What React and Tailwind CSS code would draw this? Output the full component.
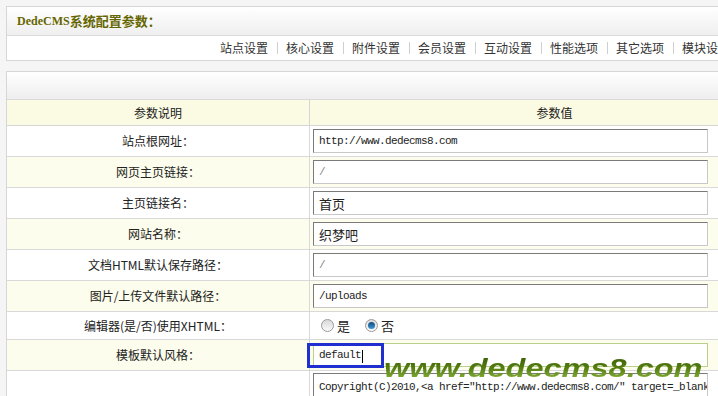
import React from "react";

const rows = [
  { label: "站点根网址：", value: "http://www.dedecms8.com", mono: true },
  { label: "网页主页链接：", value: "/", mono: true, dim: true },
  { label: "主页链接名：", value: "首页" },
  { label: "网站名称：", value: "织梦吧" },
  { label: "文档HTML默认保存路径：", value: "/", mono: true, dim: true },
  { label: "图片/上传文件默认路径：", value: "/uploads", mono: true },
  { label: "编辑器(是/否)使用XHTML：", radio: true },
  { label: "模板默认风格：", value: "default", mono: true, focus: true },
  {
    label: "",
    value: 'Copyright(C)2010,<a href="http://www.dedecms8.com/" target=_blank>织梦吧</a>',
    mono: true,
    tall: true,
  },
];

const navItems = ["站点设置", "核心设置", "附件设置", "会员设置", "互动设置", "性能选项", "其它选项", "模块设置"];

function Radio({ checked }) {
  return (
    <span className="flex h-[13px] w-[13px] items-center justify-center rounded-full border border-[#9a9a9a] bg-linear-to-b from-[#d9d9d9] to-[#fbfbfb]">
      {checked && <span className="h-[7px] w-[7px] rounded-full bg-linear-to-b from-[#0f4a80] to-[#3f9ad6]" />}
    </span>
  );
}

function ValueCell({ row }) {
  if (row.radio) {
    return (
      <div className="flex items-center gap-[3px] pl-[8px] text-[13px] text-[#222]">
        <Radio />
        <span className="mr-[12px]">是</span>
        <Radio checked />
        <span>否</span>
      </div>
    );
  }
  const font = row.mono
    ? "font-['Liberation_Mono','Noto_Sans_CJK_SC',monospace] text-[11px] tracking-[-0.6px]"
    : "text-[13px]";
  const border = row.focus
    ? "border-[#b9d08a]"
    : "border-t-[#7a7a7a] border-l-[#7a7a7a] border-r-[#c8c8c8] border-b-[#c8c8c8]";
  return (
    <input
      readOnly
      value={row.value}
      className={`h-[24px] w-[395px] border bg-white pl-[5px] outline-none ${border} ${font} ${
        row.dim ? "text-[#888]" : "text-[#222]"
      }`}
    />
  );
}

export default function App() {
  return (
    <div className="relative h-[396px] w-[718px] overflow-hidden bg-[#f5f5f5] pl-[6px] pt-[6px] font-['Noto_Sans_CJK_SC',sans-serif] text-[12px] text-[#222]">
      <div className="w-[794px]">
        <div className="border border-[#d6d6d6] bg-white">
          <div className="flex h-[29px] items-center border-b border-[#dcdcdc] bg-linear-to-b from-white to-[#efefef] pl-[10px] text-[13px] font-bold text-[#666600]">
            <span className="font-['Liberation_Serif',serif] text-[12px]">DedeCMS</span>
            <span>系统配置参数：</span>
          </div>
          <div className="flex h-[24px] items-center pl-[213px] text-[12px] text-[#333]">
            {navItems.map((item, i) => (
              <React.Fragment key={item}>
                {i > 0 && <span className="ml-[9px] mr-[8px] h-[12px] w-px bg-[#cfcfcf]" />}
                <span className="whitespace-nowrap">{item}</span>
              </React.Fragment>
            ))}
          </div>
        </div>

        <div className="mt-[10px] border border-[#d6d6d6] bg-white">
          <div className="h-[28px] border-b border-[#dadada] bg-linear-to-b from-white to-[#eeeeee]" />
          <div className="grid grid-cols-[303px_1fr]">
            <div className="flex h-[26px] items-center justify-center border-b border-r border-[#d5d5d5] bg-[#fbfbe3]">参数说明</div>
            <div className="flex h-[26px] items-center justify-center border-b border-[#d5d5d5] bg-[#fbfbe3]">参数值</div>
            {rows.map((row, i) => {
              const bg = i % 2 === 1 ? "bg-[#fcfdec]" : "bg-white";
              const h = row.radio ? "h-[28px]" : "h-[31px]";
              return (
                <React.Fragment key={i}>
                  <div className={`flex ${h} items-center justify-center border-b border-r border-[#d9d9d9] ${bg}`}>
                    {row.label}
                  </div>
                  <div className={`relative flex ${h} ${row.tall ? "items-start pt-[2px]" : "items-center"} border-b border-[#d9d9d9] pl-[3px] ${bg}`}>
                    <ValueCell row={row} />
                    {row.focus && <span className="absolute left-[52px] top-[10px] h-[13px] w-px bg-black" />}
                  </div>
                </React.Fragment>
              );
            })}
          </div>
        </div>
      </div>

      <div className="absolute left-[307px] top-[343px] h-[25px] w-[77px] border-[3px] border-[#1f2fd0]" />
      <div className="absolute left-[384px] top-[356px] origin-left scale-x-[1.3] bg-linear-to-b from-[#3a5e06] via-[#567f12] to-[#8fba3c] bg-clip-text font-['Liberation_Sans',sans-serif] text-[25px] font-bold italic leading-none text-transparent">
        www.dedecms8.com
      </div>
    </div>
  );
}
